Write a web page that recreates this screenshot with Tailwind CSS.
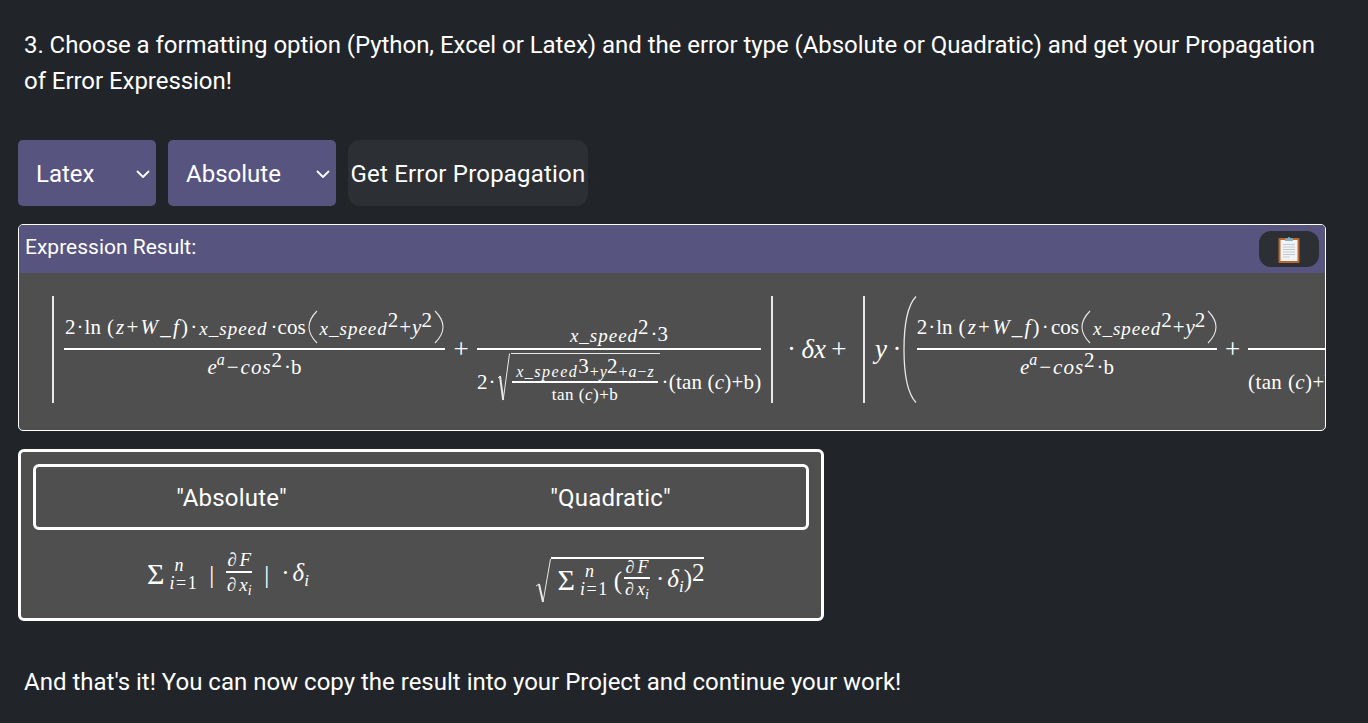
<!DOCTYPE html>
<html><head><meta charset="utf-8">
<script src="https://cdn.jsdelivr.net/npm/@tailwindcss/browser@4"></script>
</head>
<body class="bg-[#212529] text-white font-['Roboto',sans-serif] h-[723px] w-[1368px] overflow-hidden">
<div class="pl-[18px] pr-[42px] pt-[27px]">
  <p class="pl-[6px] text-[24px] leading-[36px] tracking-[-0.05px]">3. Choose a formatting option (Python, Excel or Latex) and the error type (Absolute or Quadratic) and get your Propagation of Error Expression!</p>

  <div class="mt-[41px] flex gap-[12px] h-[66px] text-[24px]">
    <div class="w-[138px] rounded-[5px] bg-[#585480] pl-[18px] pr-[5px] pt-[2px] flex items-center justify-between">
      <span>Latex</span>
      <svg width="16" height="16" viewBox="0 0 16 16" fill="none" stroke="#fff" stroke-width="1.800" stroke-linecap="round" stroke-linejoin="round"><path d="M2.500 5.500l5.500 5.500 5.500-5.500"/></svg>
    </div>
    <div class="w-[168px] rounded-[5px] bg-[#585480] pl-[18px] pr-[5px] pt-[2px] flex items-center justify-between">
      <span>Absolute</span>
      <svg width="16" height="16" viewBox="0 0 16 16" fill="none" stroke="#fff" stroke-width="1.800" stroke-linecap="round" stroke-linejoin="round"><path d="M2.500 5.500l5.500 5.500 5.500-5.500"/></svg>
    </div>
    <div class="w-[240px] rounded-[12px] bg-[#2c2f34] pt-[2px] flex items-center justify-center whitespace-nowrap tracking-[.2px]">Get Error Propagation</div>
  </div>

  <div class="mt-[18px] w-[1308px] h-[207px] rounded-[5px] border border-white bg-[#4f4f4f] overflow-hidden">
    <div class="h-[48px] bg-[#585480] flex items-center justify-between pl-[6px] pr-[6px]">
      <span class="text-[21px] pb-[3px]">Expression Result:</span>
      <div class="w-[60px] h-[36px] rounded-[12px] bg-[#2c2f34] flex items-center justify-center">
        <svg width="24" height="28" viewBox="0 0 24 28"><rect x="1.500" y="3" width="21" height="25" rx="1" fill="#b9692f"/><rect x="3.500" y="5" width="17" height="21" fill="#f1f3f4"/><path d="M6 9.500h12M6 12h12M6 14.500h12M6 17h12M6 19.500h12M6 22h7" stroke="#c3ccd2" stroke-width="1"/><path d="M8 6V3.500h2.500a1.500 1.500 0 0 1 3 0H16V6z" fill="#7fb2c6"/></svg>
      </div>
    </div>
    <div class="pt-[23px] pl-[33px] flex items-start whitespace-nowrap font-['Liberation_Serif',serif] text-[21px] leading-none h-[158px] overflow-hidden">
      <div class="w-[2px] shrink-0 h-[107px] bg-[#e8e8e8]"></div>
      <div class="ml-[10px] w-[381px] shrink-0 flex flex-col items-center">
        <div class="h-[52px] pb-[10px] flex items-end">
          <span class="tracking-[1px]">2·</span><span>ln</span><span class="ml-[6px] tracking-[2.200px]">(<i>z</i>+<i>W</i>_<i>f</i>)·</span><i class="text-[19px] tracking-[1px]">x_speed</i><span class="ml-[3px]">·cos</span><svg class="mb-[-6px] mx-[2px]" width="10" height="34" viewBox="0 0 10 34" fill="none" stroke="#e8e8e8" stroke-width="1.100"><path d="M9 1C2 8 1 13 1 17s1 9 8 16"/></svg><i class="text-[19px] tracking-[1px]">x_speed</i><span class="mb-[7px]">2</span><span class="mx-[1px]">+</span><i>y</i><span class="mb-[7px]">2</span><svg class="mb-[-6px] ml-[2px]" width="10" height="34" viewBox="0 0 10 34" fill="none" stroke="#e8e8e8" stroke-width="1.100"><path d="M1 1c7 7 8 12 8 16s-1 9-8 16"/></svg>
        </div>
        <div class="w-full h-[2px] bg-white"></div>
        <div class="h-[53px] pt-[7px] flex items-start"><i>e</i><i class="text-[16px] mt-[-5px]">a</i><span class="mx-[2px]">−</span><i class="tracking-[1px]">cos</i><span class="mt-[-7px]">2</span><span class="ml-[2px]">·b</span></div>
      </div>
      <div class="ml-[8px] w-[16px] shrink-0 h-[107px] flex items-center justify-center text-[27px] pb-[1px]">+</div>
      <div class="ml-[8px] w-[284px] shrink-0 flex flex-col items-center">
        <div class="h-[52px] pb-[3px] flex items-end"><i class="text-[19px] tracking-[1px]">x_speed</i><span class="mb-[7px]">2</span><span class="ml-[2px]">·3</span></div>
        <div class="w-full h-[2px] bg-white"></div>
        <div class="h-[53px] w-full flex items-start">
          <span class="mt-[22px] tracking-[1px]">2·</span>
          <svg class="mt-[3px] shrink-0" width="14" height="50" viewBox="0 0 14 50" fill="none" stroke="#e8e8e8"><path d="M1 25l2-2" stroke-width="1"/><path d="M3 23l3.200 24" stroke-width="2"/><path d="M6.200 47L12.500 .5" stroke-width="1"/></svg>
          <div class="shrink-0 w-[149px] border-t border-[#e8e8e8] mt-[3px] flex flex-col items-center text-[16px]">
            <div class="h-[27px] flex items-end pb-[1px]"><i class="tracking-[1.500px]">x_speed</i><span class="text-[21px] mb-[3px]">3</span><span class="mx-[1px]">+</span><i>y</i><span class="text-[21px] mb-[3px]">2</span><span class="mx-[1px]">+</span><i>a</i><span class="mx-[1px]">−</span><i>z</i></div>
            <div class="w-[146px] h-[2px] bg-white"></div>
            <div class="pt-[3px] text-[17px] tracking-[.5px]">tan (<i>c</i>)+b</div>
          </div>
          <span class="mt-[22px] ml-[2px] tracking-[.2px]">·(tan (<i>c</i>)+b)</span>
        </div>
      </div>
      <div class="ml-[10px] w-[2px] shrink-0 h-[107px] bg-[#e8e8e8]"></div>
      <div class="ml-[14px] w-[62px] shrink-0 h-[107px] flex items-center text-[27px]">·&thinsp;<i>δx</i>&thinsp;+</div>
      <div class="ml-[14px] w-[2px] shrink-0 h-[107px] bg-[#e8e8e8]"></div>
      <div class="ml-[10px] w-[28px] shrink-0 h-[107px] flex items-center text-[27px]"><i>y</i>&thinsp;·</div>
      <svg class="shrink-0" width="14" height="107" viewBox="0 0 14 107" fill="none" stroke="#e8e8e8" stroke-width="1.300"><path d="M13 .5C4 10 1 30 1 53.500S4 97 13 106.500"/></svg>
      <div class="w-[300px] shrink-0 flex flex-col items-center">
        <div class="h-[52px] pb-[10px] flex items-end"><span class="tracking-[1px]">2·</span><span>ln</span><span class="ml-[6px] tracking-[2.200px]">(<i>z</i>+<i>W</i>_<i>f</i>)·</span><span>cos</span><svg class="mb-[-6px] mx-[2px]" width="10" height="34" viewBox="0 0 10 34" fill="none" stroke="#e8e8e8" stroke-width="1.100"><path d="M9 1C2 8 1 13 1 17s1 9 8 16"/></svg><i class="text-[19px] tracking-[1px]">x_speed</i><span class="mb-[7px]">2</span><span class="mx-[1px]">+</span><i>y</i><span class="mb-[7px]">2</span><svg class="mb-[-6px] ml-[2px]" width="10" height="34" viewBox="0 0 10 34" fill="none" stroke="#e8e8e8" stroke-width="1.100"><path d="M1 1c7 7 8 12 8 16s-1 9-8 16"/></svg></div>
        <div class="w-full h-[2px] bg-white"></div>
        <div class="h-[53px] pt-[7px] flex items-start"><i>e</i><i class="text-[16px] mt-[-5px]">a</i><span class="mx-[2px]">−</span><i class="tracking-[1px]">cos</i><span class="mt-[-7px]">2</span><span class="ml-[2px]">·b</span></div>
      </div>
      <div class="ml-[7px] w-[17px] shrink-0 h-[107px] flex items-center justify-center text-[27px] pb-[1px]">+</div>
      <div class="ml-[7px] w-[200px] shrink-0 flex flex-col">
        <div class="h-[52px]"></div>
        <div class="w-full h-[2px] bg-white"></div>
        <div class="pt-[22px] tracking-[.4px]">(tan (<i>c</i>)+b)</div>
      </div>
    </div>
  </div>

  <div class="mt-[18px] w-[806px] h-[172px] rounded-[6px] border-[3px] border-white bg-[#4f4f4f] pt-[12px] px-[12px]">
    <div class="h-[66px] rounded-[6px] border-[3px] border-white pt-[2px] grid grid-cols-2 items-center text-center text-[24px] tracking-[.2px]">
      <span class="pl-[6px]">"Absolute"</span>
      <span class="pr-[6px]">"Quadratic"</span>
    </div>
    <div class="grid grid-cols-2 font-['Liberation_Serif',serif] text-[25px] leading-none whitespace-nowrap">
      <div class="flex justify-center items-center h-[88px] pl-[2px]"><span class="text-[30px]">Σ</span>
        <span class="ml-[5px] flex flex-col text-[18px] leading-[18px]"><i class="pl-[5px]">n</i><span class="tracking-[1.500px]"><i>i</i>=1</span></span>
        <span class="ml-[11px]">|</span>
        <span class="mx-[12px] flex flex-col items-center text-[19px]"><span>∂<i class="ml-[3px]">F</i></span><span class="w-[26px] h-[2px] bg-white my-[2px]"></span><span>∂<i class="ml-[3px]">x</i><i class="text-[14px] align-[-4px]">i</i></span></span>
        <span>|</span>
        <span class="ml-[12px]">·<i class="ml-[3px]">δ</i><i class="text-[17px] align-[-5px]">i</i></span>
      </div>
      <div class="flex justify-center items-center h-[88px] pl-[9px] pt-[14px]">
        <svg class="shrink-0" width="16" height="46" viewBox="0 0 16 46" fill="none" stroke="#e8e8e8"><path d="M1 28l3-2" stroke-width="1"/><path d="M4 26l4 18" stroke-width="2"/><path d="M8 44L15.500 1" stroke-width="1"/></svg>
        <span class="border-t-2 border-white flex items-center h-[46px] mt-[-2px] pl-[7px] pb-[2px]"><span class="text-[30px]">Σ</span>
          <span class="ml-[5px] flex flex-col text-[18px] leading-[18px]"><i class="pl-[5px]">n</i><span class="tracking-[1.500px]"><i>i</i>=1</span></span>
          <span class="ml-[5px]">(</span>
          <span class="flex flex-col items-center text-[18px] mx-[2px]"><span>∂<i class="ml-[3px]">F</i></span><span class="w-[26px] h-[2px] bg-white my-[1px]"></span><span>∂<i class="ml-[3px]">x</i><i class="text-[14px] align-[-4px]">i</i></span></span>
          <span class="ml-[4px]">·<i class="ml-[3px]">δ</i><i class="text-[17px] align-[-5px]">i</i>)</span><span class="mt-[-16px]">2</span>
        </span>
      </div>
    </div>
  </div>

  <p class="mt-[43px] pl-[6px] text-[24px] leading-[36px]">And that's it! You can now copy the result into your Project and continue your work!</p>
</div>
</body></html>
